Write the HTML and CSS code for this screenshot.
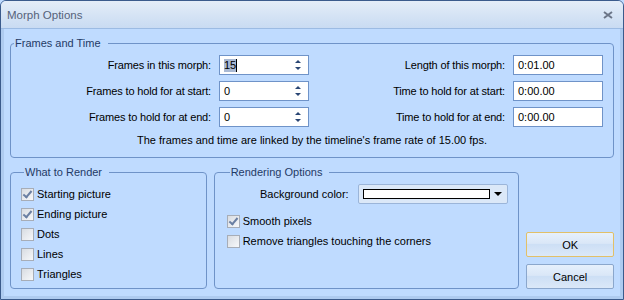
FILE: index.html
```html
<!DOCTYPE html>
<html lang="en">

<head>
    <meta charset="UTF-8">
    <link rel="stylesheet" href="styles.css">
    <title>Morph Options</title>
</head>

<body>
    <div class="window">
        <div class="titlebar">
            <span class="title">Morph Options</span>
            <svg class="close" width="10" height="8" viewBox="0 0 10 8">
                <path d="M1 1 L9 7 M9 1 L1 7" stroke="#6b7587" stroke-width="2" fill="none"/>
            </svg>
        </div>

        <div class="content">
            <fieldset class="group frames">
                <legend>Frames and Time</legend>
                <div class="grid">
                    <label>Frames in this morph:</label>
                    <div class="field spin"><span class="sel">15</span><span class="caret"></span><span class="arrows"><i class="up"></i><i class="down"></i></span></div>
                    <label>Length of this morph:</label>
                    <div class="field">0:01.00</div>

                    <label>Frames to hold for at start:</label>
                    <div class="field spin">0<span class="arrows"><i class="up"></i><i class="down"></i></span></div>
                    <label>Time to hold for at start:</label>
                    <div class="field">0:00.00</div>

                    <label>Frames to hold for at end:</label>
                    <div class="field spin">0<span class="arrows"><i class="up"></i><i class="down"></i></span></div>
                    <label>Time to hold for at end:</label>
                    <div class="field">0:00.00</div>
                </div>
                <p class="note">The frames and time are linked by the timeline's frame rate of 15.00 fps.</p>
            </fieldset>

            <div class="bottom">
                <fieldset class="group render">
                    <legend>What to Render</legend>
                    <div class="check"><span class="box on"></span>Starting picture</div>
                    <div class="check"><span class="box on"></span>Ending picture</div>
                    <div class="check"><span class="box"></span>Dots</div>
                    <div class="check"><span class="box"></span>Lines</div>
                    <div class="check"><span class="box"></span>Triangles</div>
                </fieldset>

                <fieldset class="group options">
                    <legend>Rendering Options</legend>
                    <div class="color-row">
                        <label>Background color:</label>
                        <div class="dropdown"><span class="swatch"></span><span class="drop-arrow"></span></div>
                    </div>
                    <div class="check"><span class="box on"></span>Smooth pixels</div>
                    <div class="check"><span class="box"></span>Remove triangles touching the corners</div>
                </fieldset>

                <div class="buttons">
                    <button class="default">OK</button>
                    <button>Cancel</button>
                </div>
            </div>
        </div>
    </div>
</body>

</html>
```

FILE: styles.css
```css
body {
    margin: 0;
    font-family: "Liberation Sans", Arial, sans-serif;
    font-size: 11px;
    color: #000;
    background: #bfdbff;
}

.window {
    width: 624px;
    height: 300px;
    box-sizing: border-box;
    border: 1px solid #3b5b8c;
    border-radius: 6px 6px 0 0;
    background: #bfdbff;
    display: flex;
    flex-direction: column;
    overflow: hidden;
}

.titlebar {
    height: 27px;
    flex: none;
    display: flex;
    align-items: center;
    justify-content: space-between;
    padding: 0 10px 0 6px;
    background: linear-gradient(#e4edf8, #d6e4f5 50%, #c9dbf2);
    border-bottom: 1px solid #9cbbe3;
}

.title {
    font-size: 11.5px;
    color: #55627a;
    padding-top: 1px;
}

.close {
    margin-top: 1px;
}

.content {
    flex: 1;
    padding: 7px 6px 0;
    border-left: 3px solid #aecbf0;
    border-right: 3px solid #aecbf0;
    border-bottom: 3px solid #aecbf0;
}

.group {
    margin: 0;
    padding: 0;
    min-width: 0;
    border: 1px solid #6f93c8;
    border-radius: 4px;
}

.group legend {
    margin-left: 3px;
    padding: 0 7px 0 1px;
    line-height: 14px;
    color: #1f3a66;
}

.frames {
    padding: 5px 10px 10px 0;
}

.grid {
    display: grid;
    grid-template-columns: 208px 90px 204px 90px;
    grid-auto-rows: 20px;
    row-gap: 6px;
}

.grid label {
    text-align: right;
    line-height: 20px;
    padding-right: 8px;
    letter-spacing: -0.15px;
}

.field {
    position: relative;
    box-sizing: border-box;
    height: 20px;
    background: #fff;
    border: 1px solid #6f93c8;
    line-height: 18px;
    padding-left: 4px;
    display: flex;
    align-items: center;
}

.sel {
    background: #a9b9d3;
    line-height: 13px;
}

.caret {
    display: inline-block;
    width: 1px;
    height: 13px;
    background: #000;
}

.arrows {
    position: absolute;
    right: 7px;
    top: 4px;
    display: flex;
    flex-direction: column;
    gap: 4px;
}

.arrows i {
    width: 0;
    height: 0;
    border-left: 3px solid transparent;
    border-right: 3px solid transparent;
}

.arrows .up {
    border-bottom: 3px solid #2a4674;
}

.arrows .down {
    border-top: 3px solid #2a4674;
}

.note {
    margin: 6px 0 0 10px;
    text-align: center;
    line-height: 14px;
}

.bottom {
    display: flex;
    gap: 7px;
    margin-top: 7px;
}

.render {
    width: 197px;
    box-sizing: border-box;
    height: 124px;
    padding: 5px 0 0 10px;
}

.options {
    width: 306px;
    box-sizing: border-box;
    height: 124px;
    padding: 5px 0 0 12px;
}

.check {
    display: flex;
    align-items: center;
    height: 20px;
}

.box {
    width: 13px;
    height: 13px;
    box-sizing: border-box;
    border: 1px solid #a7adb7;
    background: linear-gradient(135deg, #d8dce2, #f7f8fa);
    margin-right: 3px;
    position: relative;
}

.box.on::after {
    content: "";
    position: absolute;
    left: 3px;
    top: 0px;
    width: 3px;
    height: 7px;
    border: solid #6a7fa3;
    border-width: 0 2px 2px 0;
    transform: rotate(40deg);
}

.color-row {
    display: flex;
    align-items: center;
    height: 20px;
    margin: 0 0 7px -12px;
}

.color-row label {
    width: 134px;
    text-align: right;
    padding-right: 9px;
}

.dropdown {
    width: 150px;
    height: 20px;
    box-sizing: border-box;
    border: 1px solid #9bb5d9;
    border-radius: 2px;
    background: #dbe8f8;
    display: flex;
    align-items: center;
    padding-left: 4px;
}

.swatch {
    width: 127px;
    height: 10px;
    box-sizing: border-box;
    border: 1px solid #000;
    background: #fff;
}

.drop-arrow {
    margin-left: 4px;
    width: 0;
    height: 0;
    border-left: 4px solid transparent;
    border-right: 4px solid transparent;
    border-top: 4px solid #000;
}

.buttons {
    width: 88px;
    display: flex;
    flex-direction: column;
    justify-content: flex-end;
    gap: 7px;
}

button {
    height: 25px;
    font-family: inherit;
    font-size: 11px;
    color: #000;
    border: 1px solid #8ba7cc;
    border-radius: 2px;
    background: linear-gradient(#e6f0fc, #dae7f7 45%, #cddff5 50%, #dbe8f8);
    padding: 0;
}

button.default {
    border-color: #e2c068;
}
```
